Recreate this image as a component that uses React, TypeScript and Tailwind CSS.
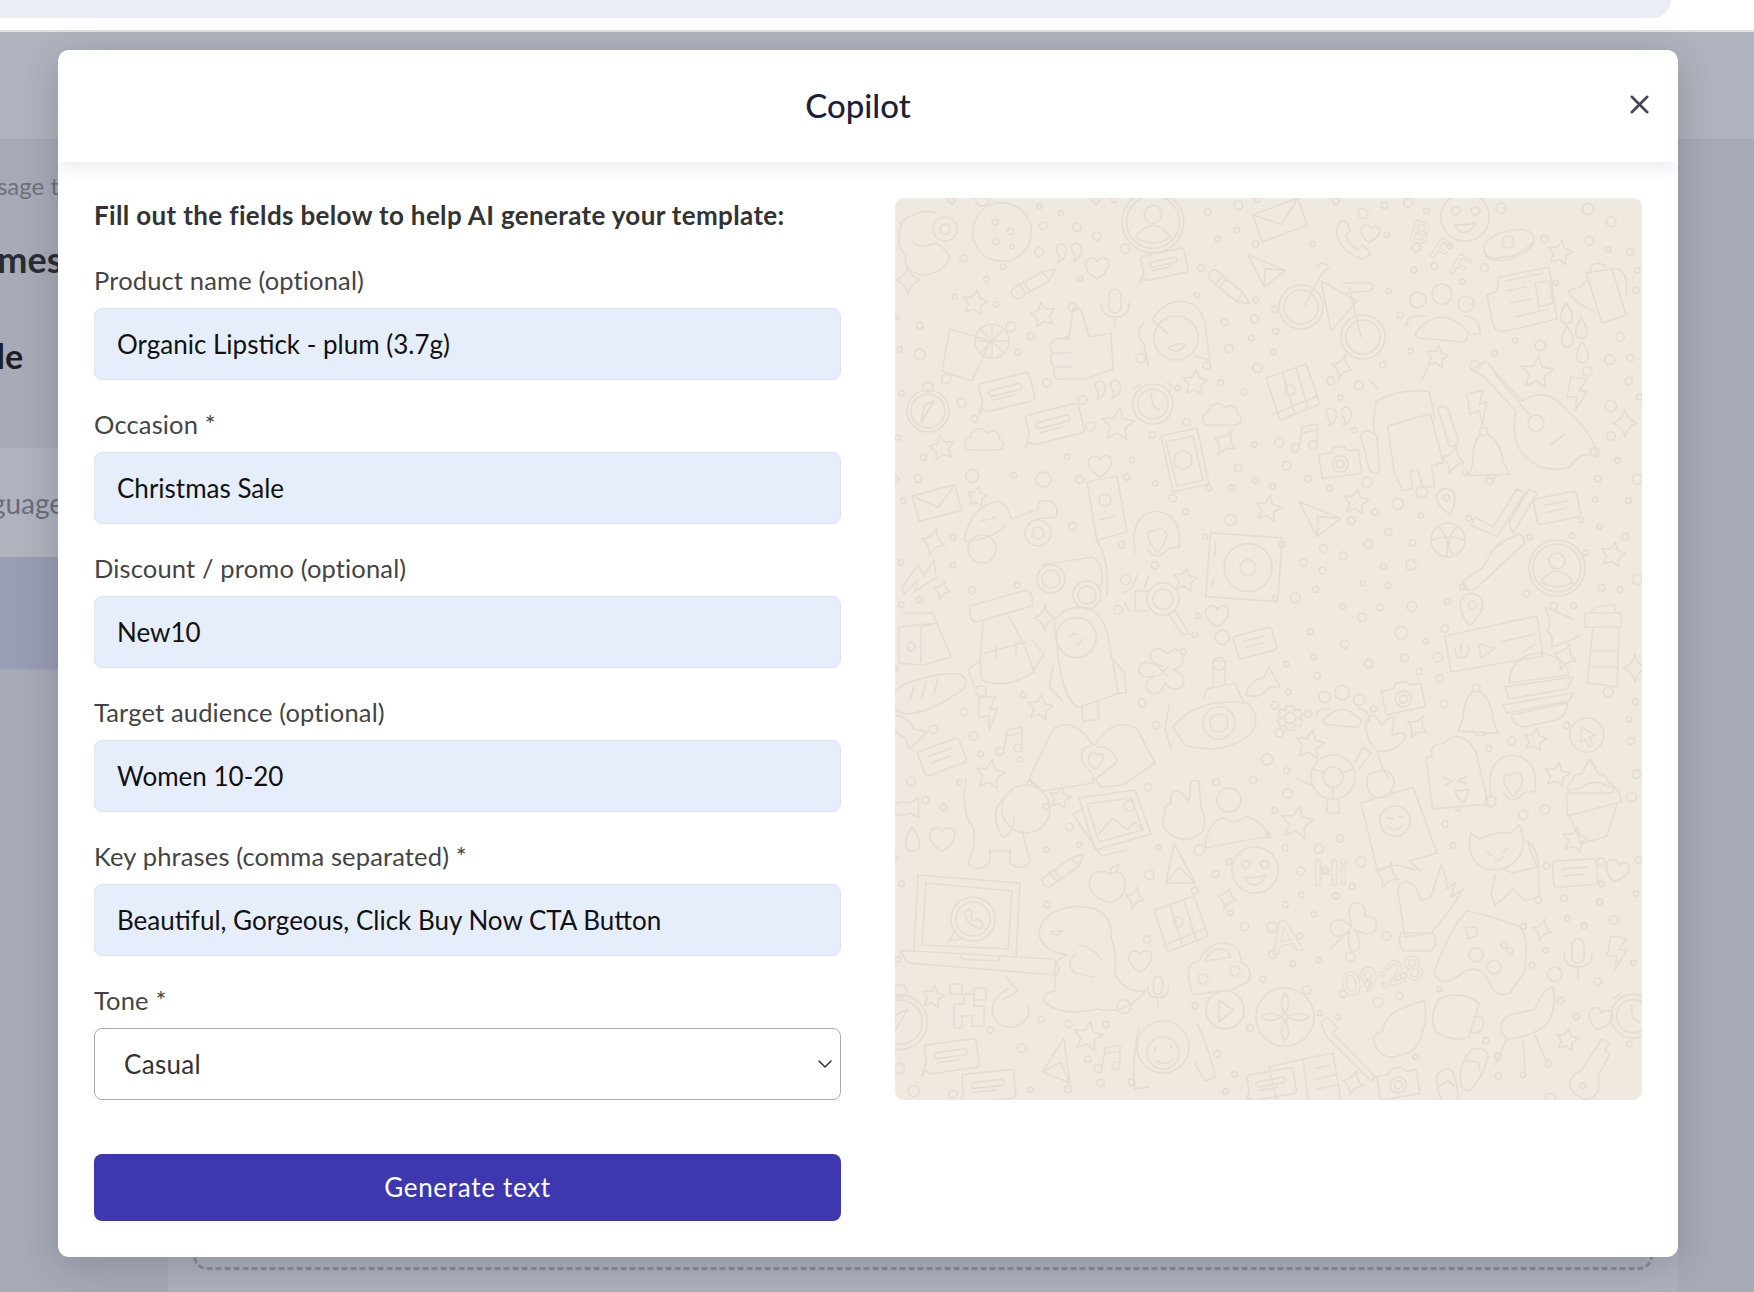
import { ChevronDown, X } from 'lucide-react';

const ring = (x: number, y: number, r: number) =>
  `M${x - r} ${y}a${r} ${r} 0 1 0 ${2 * r} 0a${r} ${r} 0 1 0 ${-2 * r} 0Z`;

const starPath = (R: number, r: number) => {
  const pts: string[] = [];
  for (let i = 0; i < 10; i++) {
    const a = -Math.PI / 2 + (i * Math.PI) / 5;
    const v = i % 2 ? r : R;
    pts.push(`${(Math.cos(a) * v).toFixed(1)} ${(Math.sin(a) * v).toFixed(1)}`);
  }
  return `M${pts.join('L')}Z`;
};

// wallpaper doodles, each drawn around 0,0. r is how much room it keeps free of dots
const shapes: Record<string, { d: string; r: number }> = {
  star: { d: starPath(13, 6.5), r: 15 },
  bigstar: { d: starPath(17, 8), r: 19 },
  spark: { d: 'M0-14Q2-3 12 0Q2 3 0 14Q-2 3-12 0Q-2-3 0-14Z', r: 14 },
  heart: { d: 'M0 12C-14 4-14-8-6-9C-3-10 0-7 0-5C2-8 5-10 8-9C15-7 12 5 0 12Z', r: 13 },
  cloud: { d: 'M-14 10C-22 10-22-2-14-3C-14-12-2-14 2-7C8-12 16-8 14-1C20 0 20 10 12 10Z', r: 20 },
  chat: { d: 'M-24-12Q-24-15-20-15H24Q28-15 28-11V10Q28 14 24 14H-20Q-24 14-25 10L-31 15L-24 3ZM-14-6H16Q19-3 16 0H-14Q-17-3-14-6ZM-14 4H8', r: 32 },
  card: { d: 'M-20-13H18Q22-13 22-9V9Q22 13 18 13H-18Q-22 13-22 9V-9Q-22-13-20-13ZM-12-5H12M-12 2H8', r: 24 },
  pencil: { d: 'M-20 6L8-14L21-18L16-6L-12 14Q-16 16-20 12Q-22 8-20 6ZM-14 0L-6 10M-10-3L-2 7M8-14L16-6', r: 24 },
  envelope: { d: 'M-20-12H20V12H-20ZM-20-12L0 4L20-12', r: 24 },
  handset: { d: 'M-10-16Q-16-10-12 0Q-6 12 8 16Q14 14 14 10L8 4L4 8Q-4 4-6-4L-2-8L-6-16Z', r: 18 },
  mic: { d: 'M-6-8A6 6 0 0 1 6-8V4A6 6 0 0 1-6 4ZM-14 0Q-14 14 0 14Q14 14 14 0M0 14V26', r: 24 },
  camera: { d: `M-20-10H-8L-4-15H6L10-10H20V14H-20Z${ring(0, 2, 8)}${ring(0, 2, 4)}`, r: 24 },
  avatar: { d: `${ring(0, 0, 28)}${ring(0, 0, 24)}${ring(0, -7, 8)}M-16 14Q0-8 16 14Q0 24-16 14Z`, r: 30 },
  cookie: { d: `${ring(0, 0, 28)}${ring(-8, -8, 3)}${ring(8, -2, 3)}${ring(-4, 10, 3)}${ring(12, 12, 2)}`, r: 30 },
  bear: { d: `${ring(15, -8, 12)}${ring(15, -8, 5)}M-30-14Q-10-30 6-24M-28-14Q-36 8-24 18Q-28 36-6 38Q14 36 20 20Q12 8 6 6Q-14 14-18 2`, r: 38 },
  donut: { d: `M-24 6C-26-12 20-24 26-8C30 10-20 26-24 6ZM-23 8C-16 18-6 10 2 12C10 8 18 6 26-4${ring(0, -3, 6)}`, r: 28 },
  emoji: { d: `${ring(0, 0, 22)}M-13-6Q-8-12-4-6Q-6-2-10-1ZM5-7Q11-12 14-5Q11-1 7-2ZM-9 7Q2 8 10 5Q6 15-3 14Q-8 13-9 7Z`, r: 24 },
  bike: { d: `${ring(-32, 0, 22)}${ring(-32, 0, 17)}${ring(30, 30, 22)}${ring(30, 30, 17)}M-28-2L-12-32L-4-40Q-12-48-16-40M-12-26L24-6L-2 24M-12-26L-2 24M28 30L16-20M10-24H38Q42-18 36-16L14-14`, r: 56 },
  people: { d: `${ring(-24, -18, 8)}${ring(0, -24, 10)}${ring(24, -14, 8)}M-26 14Q-0-16 26 14Q26 24 20 24L-22 20Q-28 18-26 14ZM-36 8Q-34-4-16-2M22-2Q38-2 38 16H28`, r: 40 },
  news: { d: 'M-24-26L26-36L34 16L-16 28L-22 28Q-28 28-30 22L-36-8L-26-12ZM-18-22L20-30M-16-12L2-16M-12 0L8-4M-8 14L26 6M12-20L26-22L30 0L16 4Z', r: 38 },
  teapot: { d: 'M-14-20L12-24L26 22L2 30ZM-12-14L-20-6L-32-2Q-24 12-6 18M12-24Q30-26 26 4M-10-22L-8-28Q0-32 6-26', r: 34 },
  drop: { d: 'M0-11Q8 0 6 6Q2 12-4 8Q-8 2 0-11Z', r: 10 },
  map: { d: `M-24-12L16-26L30 14L-10 30ZM-8-18L4 22M6-22L18 18${ring(0, 0, 5)}M-16 24L28 6`, r: 32 },
  android: { d: `M-34 4V-8L-28-30Q0-40 26-32L28-4M-24-42L-32-52M20-44L28-56M-20-4L24-10L30 40L18 42V62H6L4 44L-4 44V62H-14L-20 44ZM-40-2Q-48-2-48 4L-44 38Q-38 44-34 38L-32 4ZM32-14Q38-18 42-12L48 20Q44 28 38 24Z`, r: 56 },
  guitar: { d: `M-58-54L-44-62L-34-50L-8-22Q14-36 32-18L46-4Q62 10 68 34Q50 26 40 44Q12 52-6 32Q-20 16-14-12L-44-44Z${ring(6, 0, 8)}M20 22L34 12M-36-50L0-8`, r: 70 },
  bolt: { d: 'M-6-16L10-14L2-2L10-2L-2 18L0 4L-10 4Z', r: 16 },
  music: { d: `${ring(-10, 11, 4)}${ring(8, 8, 4)}M-6 11L-3-10L12-13L12 8M-4-4L12-7`, r: 15 },
  quote: { d: 'M-11-1Q-14-9-6-9Q0-6-2 0Q-4 8-10 9Q-6 4-11-1ZM4-2Q2-10 9-10Q15-7 13 0Q11 7 5 8Q9 3 4-2Z', r: 14 },
  bell: { d: `${ring(0, -19, 4)}M-4-16Q-14-8-16 10L-22 22L18 28L14 14Q14-6 4-15M-6 26Q0 32 6 27`, r: 26 },
  send: { d: 'M-18-20L20 4L-6 18ZM-6 18L-2-2L20 4', r: 22 },
  thumb: { d: 'M-8-10L-4-38Q2-42 6-32L12-10L34-14L36 22L8 32L-20 32Q-26 26-22 20Q-30 14-24 6Q-30-2-22-8ZM-24 6H-6M-22 20H-6M-20-8H-6', r: 38 },
  drink: { d: `M-22-18L18-6L0 34L-30 24Z${ring(20, -6, 17)}M20-22V10M6-6H36M8-18L32 6M8 6L32-18`, r: 36 },
  girl: { d: `${ring(-2, 8, 22)}M-10 4L-26-10Q-12-32 8-28Q26-24 28 2L32 30L16 26M-34-8Q-44 4-34 14L-30 36M-10 18Q0 26 8 14Q2 12-10 18Z`, r: 38 },
  compass: { d: `${ring(0, 4, 21)}${ring(0, 4, 17)}${ring(0, -20, 5)}M6-6L-7 16L-3-2Z`, r: 26 },
  clock: { d: `${ring(0, 2, 20)}${ring(0, 2, 15)}M-2-8L0 4L6 8M-18-14L-12-18M14-20L20-14`, r: 24 },
  phone: { d: `M-22-22L14-30L26 26L-10 34ZM-17-16L10-22L20 22L-6 28Z${ring(0, 2, 9)}`, r: 34 },
  bubblefish: { d: 'M-20 0Q-8-14 10-8L22-16V12L10 6Q-8 14-20 0Z', r: 24 },
  scooter: { d: `M-46 14Q-40-20-12-26Q-4-24 2-8L28-18Q26-28 40-26Q50-20 46-10L26-8M-46 14Q-20 14-4-2M-28-6L-14-10${ring(-28, 22, 14)}${ring(28, 6, 13)}${ring(28, 6, 6)}`, r: 50 },
  power: { d: `M-16-28L14-34L24 22L-6 30Z${ring(2, -10, 6)}M-4 10L12 6`, r: 32 },
  dome: { d: 'M-22 20Q-28-20 0-22Q26-18 22 14L10 16Q0 30-10 16M-8 8Q-12-4-2-2Q6-8 10 2Q8 12 0 20Z', r: 26 },
  vinyl: { d: `M-32-32H40V32H-32Z${ring(8, 0, 24)}${ring(8, 0, 8)}M-26-8V-24M-26 14V20`, r: 44 },
  ribbon: { d: 'M-18 10L-2-14L4-2L14-18L16 0L-6 14L-2 2L-16 16Z', r: 18 },
  glasses: { d: `${ring(-22, -4, 14)}${ring(-22, -4, 9)}${ring(14, 12, 14)}${ring(14, 12, 9)}M-32-18L20-26Q32-18 28 4M22-44Q36-30 34 12`, r: 44 },
  magnifier: { d: `${ring(6, -4, 16)}${ring(6, -4, 10)}M18 8L32 30L26 32L12 12M-8-12H-22V8H-10M-26-14L-34-10M-32 0L-28 8M-20-28L-24-16M-8-28L-12-16`, r: 36 },
  milk: { d: 'M-26-10L12-14L26 20L-2 28L-26 26ZM-22-24H8L12-14M12-14L-4-10V26M-18 10Q-14 0-10 10Q-14 18-18 10Z', r: 32 },
  backpack: { d: 'M-30-34L26-50Q34-48 32-34L-24-18Q-32-20-30-34ZM-16-20Q-22 20-18 40Q6 50 34 32Q24 0 8-24M-18 14L26 2M-4 6V18M16 2V14M-20 20L-32 30L-26 46M32 0L44 14L34 30', r: 50 },
  astro: { d: `${ring(-4, -26, 20)}M-24-24Q-30-56 0-56Q26-56 28-18L32 34L-10 44Q-26 30-24-24ZM-10-28Q-6-32-2-28M2-24Q-4-16-6-20M-6 44V58H10V40M-30 0L-36 20L-24 36M28-4L40 14V34L28 34`, r: 58 },
  flower: { d: 'M0-6Q-16-10-12-20Q-4-28 4-18Q14-28 20-16Q22-6 10-2Q24 2 20 14Q8 22 2 10Q-2 26-14 20Q-22 10-8 4Q-24 8-24-4Q-20-14-6-6ZM-4-4L4 4M4-4L-4 4', r: 24 },
  bread: { d: 'M-36 18Q-44 2-20-8Q10-18 30-16Q44-6 26 4Q0 22-22 24Q-30 24-36 18ZM-16-4L-20 10M-4-8L-8 8M8-12L4 4', r: 38 },
  sub: { d: `M-44 4Q-20-26 30-20Q44-8 36 8Q10 34-32 22Z${ring(2, 0, 16)}${ring(2, 0, 9)}M-14-24L-10-34L18-40L26-22M-4-36V-62M8-40V-60M-4-62H10M-48-18L-52 6L-46 26`, r: 56 },
  hands: { d: 'M-64 26L-40-24Q-20-38 0-8Q-16-6-10 10L0 22L0 30L-50 38ZM2-8Q20-38 44-24L62 10L30 32L8 34L2 26Q20 14 24 8Q18-8 4-6M-4 4Q0-4 4 2Q10-2 10 6Q6 14 2 16Q-6 12-4 4Z', r: 62 },
  checks: { d: 'M-28 4L-10 14L14-24L22-20L-6 24L-32 12ZM6 10L26-24L34-20L10 20Z', r: 30 },
  ball: { d: `${ring(0, 0, 17)}M-17 0Q0-6 17 0M-10-14Q4 0 -2 17M10-14Q-6 0 6 16`, r: 19 },
  shoe: { d: 'M-30 20L-10 6L6-18L26-28Q34-26 32-18L-18 28Q-28 30-30 20ZM-24 26L-30 20M-2-10L12-20', r: 36 },
  pin: { d: `M0 18Q-14 4-12-6Q-8-16 2-14Q12-10 10 0Q8 10 0 18Z${ring(0, -3, 4)}`, r: 18 },
  voice: { d: `M-48-4L44-24L50 16L-42 32ZM-32 4V16M-38 8Q-38 18-32 18Q-24 18-24 6M-14 4L2 8L-12 18ZM8 2L42-6M30 12L42 4`, r: 48 },
  light: { d: `M-18-30H18L18-16H-18ZM-12-30Q-10-38 12-38L12-30M-10-16L-16 40L14 44L16-16M-12 8H14M-14 24H14M-30-24L-58-36Q-50-20-56-12Q-48-8-52 4Q-36 0-22-8`, r: 44 },
  burger: { d: 'M-28-10Q-26-40 6-40Q30-34 32-18ZM-32-6L36-16L30-4L-28 6ZM-34 12L36 0L32 8L-30 20ZM-26 22L30 10Q30 26 14 28L-14 34Q-24 32-26 22Z', r: 42 },
  gear: { d: `${ring(0, 0, 7)}M-5-15H5L6-9L12-11L16-3L10 0L16 3L12 11L6 9L5 15H-5L-6 9L-12 11L-16 3L-10 0L-16-3L-12-11L-6-9Z`, r: 17 },
  tulip: { d: 'M-16-24Q-18-36-8-38L0-28Q8-38 12-36L10-18Q22-22 24-16Q14 0-4-2Q-14-8-16-24ZM-4-2Q-2 14 6 24M-14 22Q0 14 8 20Q18 30 4 44Q-10 48-14 36Q-16 28-14 22Z', r: 44 },
  taco: { d: 'M-24 40L-26-6Q-28-14-20-12Q-22-26-8-24Q10-40 24-14L32 40ZM-10 18L-2 14L-10 10M14 10L4 14L12 18M0 24H14L8 36Q2 34 0 24Z', r: 38 },
  turtle: { d: `${ring(0, 0, 22)}${ring(0, 0, 10)}M-20-8L-8-4M20-8L8-4M0 10V22M22-14L30-30L38-24L26-8M-22 8L-36 2M-6 22V36H6V22`, r: 38 },
  cursorbadge: { d: `${ring(0, 0, 17)}M-6-8L8 0L2 2L6 10L2 12L-2 4L-6 8Z`, r: 18 },
  poop: { d: 'M0-22Q8-10 10-4Q22-4 22 6Q34 10 28 20H-26Q-32 10-22 6Q-22-4-10-4Q-6-14 0-22Z', r: 30 },
  dog: { d: `${ring(26, -18, 24)}M4-28Q-12-16 2 10Q14 8 14-10M-34-48Q-40-14-26 2Q-24 20-32 36Q-20 48-10 34V24H10L10 36Q22 46 30 34L22 4`, r: 48 },
  photo: { d: `M-34-22L22-30L38 14L-18 30ZM-26-16L18-22L30 10L-14 22Z${ring(16, -14, 5)}M-16 16L0-2L14 10L22 2L30 10M-30-12L-40-6L-12 36L14 30`, r: 42 },
  victory: { d: 'M-20 0Q-26 14-14 22Q4 32 18 18Q22 4 16-6L14-32L6-32L4-12L-6-22Q-16-24-14-10Q-22-8-20 0Z', r: 34 },
  person: { d: `${ring(-4, -20, 12)}M-28 28Q-26 2-10-2Q2 6 14-4Q30 2 36 16Z`, r: 36 },
  apple: { d: 'M-16-6Q-6-14 2-8Q14-14 18-2Q20 14 6 20Q0 22-4 18Q-16 14-18 2ZM2-8Q4-16 12-18Q12-10 4-8', r: 22 },
  laptop: { d: 'M-52-48L50-40L46 34L-56 28ZM-44-40L42-32L38 26L-48 22ZM-70 28L-62 40L86 52Q92 46 84 36L46 34M-56 28L-70 28M-10 30L-8 36L28 38L30 32', r: 84 },
  wa: { d: `${ring(0, 0, 22)}${ring(0, 0, 17)}M-18 12L-24 22L-10 20M-8-8Q-8 6 8 10L10 4L4 0L0 2Q-2 0-2-4L0-6L-4-10Z`, r: 24 },
  dino: { d: `M-40-36Q-20-52 8-44Q26-36 24-16Q30 0 28 20Q36 40 58 38Q40 62 10 56Q-24 64-42 50Q-46 40-32 38V12Q-28 4-20 2Q-44-2-48-18Q-48-28-40-36ZM-36-20Q-30-16-24-22H-36ZM-8-8Q6-6 14 6M-12 2Q-22 10-12 20L6 24`, r: 62 },
  car: { d: `M-28 14Q-32-4-18-6Q-10-24 8-24Q24-22 24-4Q36 0 32 14L16 22L-24 28Z${ring(-14, 12, 5)}${ring(18, 4, 5)}M-12-6L14-10Q12-18 2-18Q-8-16-12-6Z`, r: 34 },
  play: { d: `${ring(0, 0, 19)}M-6-10L8 0L-6 12Z`, r: 20 },
  monkey: { d: `${ring(-4, 0, 26)}${ring(-4, 6, 16)}M-28-20Q-36 20-32 42L-18 40M30-24Q44 6 48 30L38 34L28 16M-12 0V4M4-2V2M-10 14Q-2 20 6 12`, r: 48 },
  pixel: { d: 'M-18-16H-6V-6H-18ZM6-12H18V0H6ZM-4-6H6V6H16V26H4V16H-6V28H-14V4H-4Z', r: 28 },
  refresh: { d: 'M-2-18Q-18-10-18 4Q-14 22 4 20Q22 14 18-2M-4-30L8-16L-6-8', r: 26 },
  wink: { d: `M-34-24L18-40L42 26L14 34L26 44L2 38L-18 42Z${ring(0, -6, 15)}M-8-10L-2-8M4-10H8M-6 0Q0 6 8-2`, r: 42 },
  clover: { d: 'M0 0Q-6-20 2-22Q12-24 12-10Q24-10 22 2Q18 10 2 2Q12 18 2 22Q-6 20-2 4Q-16 14-20 2Q-20-8-8-6ZM0 0L-20 20', r: 24 },
  okhand: { d: 'M-18 34L-24-4Q-28-20-16-22Q-6-18-2-2Q4-4 8-6L18-38Q24-24 24-14L32-20L28-6L40-14Q28 8 8 30ZM-22 30H10Q16 40 8 48H-20Q-26 40-22 30Z', r: 48 },
  pad: { d: `M-46 18Q-24-36-12-42Q16-36 40-26Q50-14 44 20L30 40Q14 46 8 26Q-2 10-18 20Q-40 38-46 18Z${ring(-4, 2, 7)}${ring(14, 14, 7)}M-14-26L-4-26L-2-18L-12-14Z${ring(24, -8, 3)}${ring(30, -2, 3)}`, r: 48 },
  lemon: { d: `${ring(0, 0, 29)}${ring(0, 0, 3)}M0-3Q-7-16 0-24Q7-16 0-3M3 0Q16-7 24 0Q16 7 3 0M0 3Q-7 16 0 24Q7 16 0 3M-3 0Q-16-7-24 0Q-16 7-3 0`, r: 30 },
  croissant: { d: `M-22 20Q-32 4-18 2Q-14-18 8-24L24-30Q28-10 22 2Q20 22-2 26Q-14 30-22 20Z`, r: 30 },
  mug: { d: `M-16-16Q4-26 24-12L14 22Q-4 28-20 16Q-26 0-16-16ZM18 2Q30-2 28 12Q24 20 14 18`, r: 28 },
  chair: { d: 'M-26 0Q-26-12-8-14L8-18Q16-38 26-40Q30-24 22-6Q12 8-18 12Q-26 10-26 0ZM-20 12L-32 38M-4 14L-2 42M8 8L22 40', r: 40 },
  key: { d: `M-8 6L4-30L12-28L10-20L16-18L10 6Q20 26 4 32Q-14 32-16 18Q-14 10-8 6Z${ring(-2, 20, 3)}`, r: 32 },
  flip: { d: 'M-6 22Q-16 4-6-16Q6-24 12-14Q12 8 4 22Q0 26-6 22ZM-10-4L4-6L8 2', r: 24 },
  brush: { d: 'M-26-24L-20-30L-10-20L-14-14L28 30L24 34L-20-10Z', r: 30 },
  book: { d: 'M-38-10L-4-18L2 28L-28 34ZM-4-18L26-24L34 24L2 28M8-8L22-12M8 2L28-2M10 12L30 8', r: 42 },
  cupcake: { d: 'M-26-8Q-30-22-12-22Q0-32 14-24Q28-24 28-8L-26 6ZM-24 4L-12 34L14 26L24-6', r: 34 },
  cat: { d: `M-26-34L-18-28Q0-36 14-34L22-42Q30-28 24-14Q14 6-12 2Q-32-8-26-34ZM-10-16L-6-12M10-18L6-14M-2-8Q2-4 6-10M6 2L16 6L40 0L30-26Q42-20 42 10L42 30L28 34L16 22L8 30L-2 38L-6 28L-2 8`, r: 44 },
};

// [shape, x, y, scale, rotation] in pattern coordinates (the panel is 747 by 900)
const doodles: [string, number, number, number, number][] = [
  ['avatar', 258, 23, 1.1, 0], ['cookie', 107, 33, 1.05, 10], ['bear', 35, 38, 1, 0], ['pencil', 138, 86, 1, 5],
  ['chat', 268, 66, 0.85, -12], ['pencil', 332, 89, 1, 75], ['mic', 220, 104, 1, 0], ['thumb', 182, 148, 1, 0],
  ['girl', 283, 131, 1, 0], ['drink', 77, 148, 1, 0], ['chat', 110, 194, 1, -14], ['chat', 158, 226, 1.05, -14],
  ['compass', 33, 208, 1, 0], ['clock', 258, 203, 1, 0], ['cloud', 328, 216, 1, 0], ['cloud', 90, 241, 1, 0],
  ['phone', 288, 259, 1, 0], ['heart', 202, 68, 1, 0], ['heart', 205, 266, 1, 0], ['star', 80, 104, 1, 10],
  ['star', 148, 116, 1, -10], ['star', 300, 184, 1, 5], ['bigstar', 223, 226, 1, 5], ['star', 47, 249, 1, -10],
  ['spark', 13, 81, 1, 0], ['spark', 330, 244, 1, 30], ['quote', 173, 54, 1, 0], ['quote', 212, 191, 1, 0],
  ['send', 372, 71, 0.9, -10], ['emoji', 570, 18, 1.1, 0], ['donut', 613, 46, 1, 0], ['handset', 458, 41, 1.2, 0],
  ['heart', 475, 34, 0.8, 10], ['bike', 438, 108, 1, 0], ['people', 547, 119, 1, 0], ['news', 628, 104, 1, 0],
  ['teapot', 705, 94, 1, 0], ['drop', 671, 115, 1, 0], ['drop', 686, 130, 1, 0], ['drop', 672, 138, 1, 0], ['drop', 687, 154, 1, 0],
  ['bigstar', 642, 174, 1, 5], ['star', 542, 158, 0.9, 10], ['star', 665, 54, 1, 10], ['map', 395, 191, 1, 0],
  ['android', 513, 228, 1, -8], ['guitar', 635, 224, 1, 0], ['bolt', 682, 194, 1, 0], ['bolt', 583, 208, 1, -20],
  ['spark', 730, 224, 1, 0], ['spark', 447, 168, 0.9, 15], ['spark', 558, 261, 1, 15], ['music', 410, 238, 1, 0],
  ['quote', 443, 218, 1, 0], ['camera', 445, 263, 1, -8], ['bell', 592, 251, 1, -10], ['envelope', 385, 21, 1.2, -20],
  ['envelope', 42, 304, 1.1, -15], ['scooter', 115, 328, 1, 0], ['power', 208, 311, 1, 0], ['dome', 262, 334, 1, 0],
  ['vinyl', 345, 368, 1, 4], ['spark', 38, 343, 1, 15], ['spark', 47, 391, 0.7, 15], ['spark', 150, 419, 0.9, 0],
  ['ribbon', 25, 379, 1, 0], ['glasses', 178, 384, 1, 0], ['magnifier', 262, 404, 1, 0], ['milk', 30, 438, 1, 0],
  ['backpack', 105, 441, 1, 0], ['astro', 188, 464, 1, -6], ['flower', 268, 473, 1, 0], ['bread', 35, 491, 1, 0],
  ['sub', 322, 524, 1, 0], ['hands', 198, 554, 1, 0], ['bolt', 93, 513, 1, -10], ['star', 145, 509, 1, 8],
  ['star', 290, 381, 0.95, 8], ['bigstar', 95, 576, 0.9, 8], ['star', 82, 298, 0.8, 8], ['heart', 322, 416, 1, 0],
  ['music', 115, 541, 1, 0], ['card', 47, 558, 1, -20], ['card', 360, 444, 0.9, -15], ['bubblefish', 365, 488, 0.8, -30],
  ['bubblefish', 8, 529, 0.9, 45], ['bigstar', 373, 310, 0.8, 10], ['bubblefish', 8, 610, 0.7, 0],
  ['send', 425, 319, 1, -10], ['star', 461, 303, 1, 8], ['pin', 552, 301, 0.8, -10], ['pin', 577, 409, 1, 10],
  ['checks', 608, 314, 1, 0], ['card', 662, 309, 1, -12], ['ball', 553, 341, 1, 0], ['shoe', 597, 363, 1, 0],
  ['avatar', 662, 369, 1, 0], ['star', 718, 356, 1, 10], ['voice', 598, 441, 1, 0], ['light', 708, 444, 1, 0],
  ['spark', 670, 458, 1, 20], ['spark', 740, 469, 1, 0], ['spark', 522, 528, 0.9, 30], ['burger', 642, 494, 1, 0],
  ['camera', 508, 498, 1, -12], ['bell', 583, 508, 1, -5], ['people', 447, 511, 0.72, 0], ['gear', 395, 519, 0.8, 0],
  ['tulip', 487, 554, 1, 0], ['taco', 558, 568, 1, -5], ['cursorbadge', 692, 536, 1, 0], ['star', 640, 541, 0.9, 10],
  ['bigstar', 415, 546, 0.9, 10], ['star', 662, 576, 1, 10], ['poop', 695, 578, 0.8, 0], ['turtle', 438, 578, 1, 0],
  ['dome', 618, 578, 1, 0], ['dog', 105, 628, 1, 0], ['photo', 218, 621, 1, 0], ['victory', 290, 614, 1, 0],
  ['person', 338, 621, 1, 0], ['heart', 47, 639, 1.1, 0], ['drop', 17, 641, 1.2, 0], ['pencil', 168, 673, 1, 0],
  ['apple', 212, 683, 1, 0], ['send', 285, 671, 1, 30], ['emoji', 360, 671, 1.05, 0], ['laptop', 75, 724, 1, 0],
  ['wa', 78, 720, 1, 0], ['dino', 192, 754, 1, 0], ['map', 283, 723, 1, 0], ['car', 322, 768, 1, 0],
  ['heart', 245, 761, 1, 0], ['mic', 263, 788, 0.75, 0], ['play', 330, 811, 1, 0], ['monkey', 272, 848, 1, 0],
  ['pixel', 73, 801, 1, 0], ['refresh', 115, 808, 1, 0], ['star', 38, 798, 0.9, 10], ['bigstar', 193, 838, 0.9, 10],
  ['chat', 55, 858, 1, -8], ['chat', 92, 888, 1, -6], ['send', 165, 866, 1, 50], ['music', 213, 859, 1, 0],
  ['spark', 240, 699, 0.8, 15], ['spark', 332, 699, 0.8, 15], ['star', 165, 599, 0.85, 10], ['compass', 5, 818, 1.3, 0],
  ['chat', 375, 886, 0.9, -10], ['wink', 500, 628, 1, 0], ['clover', 457, 728, 1.1, 0], ['okhand', 528, 704, 1, 0],
  ['cat', 602, 668, 1, 0], ['pad', 585, 754, 1, 0], ['lemon', 390, 818, 1, 0], ['croissant', 505, 831, 1, 0],
  ['mug', 560, 816, 1, 0], ['chair', 632, 828, 1, 0], ['key', 695, 868, 1, 15], ['flip', 578, 868, 1, 15],
  ['flip', 552, 888, 0.9, -20], ['brush', 452, 848, 1, 0], ['book', 412, 878, 1, 0], ['camera', 503, 884, 1, -10],
  ['card', 680, 674, 1, -4], ['heart', 722, 671, 1, 15], ['heart', 705, 819, 1, 15], ['mic', 683, 754, 1, 0],
  ['bolt', 722, 753, 1, 0], ['bigstar', 402, 624, 1, 8], ['star', 680, 641, 1, 10], ['star', 672, 841, 0.9, 10],
  ['cupcake', 698, 611, 1, 0], ['spark', 492, 676, 1, 20], ['spark', 647, 731, 0.8, 15], ['spark', 458, 884, 0.9, 15],
  ['clock', 738, 815, 1.1, 0],
];

// letters in the wallpaper stay real text
const letters: [string, number, number, number, number][] = [
  ['B', 512, 40, 30, 20], ['F', 533, 56, 30, 30], ['F', 552, 72, 30, 30], ['Hi', 418, 686, 34, 0], ['A', 378, 756, 44, -10], ['09:28', 450, 798, 32, -14],
];

// little bubbles that fill the gaps, kept clear of the doodles
function makeDots() {
  const dots: { x: number; y: number; r: number }[] = [];
  let seed = 7;
  const rnd = () => {
    seed = (seed * 16807) % 2147483647;
    return seed / 2147483647;
  };
  for (let i = 0; i < 2600; i++) {
    const x = rnd() * 747;
    const y = rnd() * 900;
    const r = 2.5 + rnd() * rnd() * 5;
    const hit = doodles.some(([k, dx, dy, s]) => Math.hypot(dx - x, dy - y) < shapes[k].r * s * 0.88 + r + 2);
    if (hit || dots.some((d) => Math.hypot(d.x - x, d.y - y) < d.r + r + 12)) continue;
    dots.push({ x, y, r });
  }
  return dots;
}
const dots = makeDots();

function Wallpaper() {
  return (
    <svg viewBox="0 0 747 900" className="block w-[747px] h-[902px]" fill="none" stroke="#e4ded2" strokeWidth="1.7" strokeLinejoin="round" strokeLinecap="round">
      {dots.map((d, i) => (
        <circle key={i} cx={d.x} cy={d.y} r={d.r} />
      ))}
      {doodles.map(([k, x, y, s, rot], i) => (
        <path key={i} d={shapes[k].d} vectorEffect="non-scaling-stroke" transform={`translate(${x} ${y}) rotate(${rot}) scale(${s})`} />
      ))}
      {letters.map(([t, x, y, size, rot], i) => (
        <text key={i} x={x} y={y} fontSize={size} fontWeight="700" fontFamily="Lato, sans-serif" strokeWidth="1" transform={`rotate(${rot} ${x} ${y})`}>
          {t}
        </text>
      ))}
    </svg>
  );
}

const fields = [
  { label: 'Product name (optional)', value: 'Organic Lipstick - plum (3.7g)' },
  { label: 'Occasion *', value: 'Christmas Sale' },
  { label: 'Discount / promo (optional)', value: 'New10' },
  { label: 'Target audience (optional)', value: 'Women 10-20' },
  { label: 'Key phrases (comma separated) *', value: 'Beautiful, Gorgeous, Click Buy Now CTA Button' },
];

export default function App() {
  return (
    <div className="relative w-[1754px] h-[1292px] overflow-hidden bg-[#a7abb7] font-['Lato',sans-serif]">
      {/* Page behind the dialog */}
      <div className="h-[32px] bg-white border-b-2 border-[#e0e0e0]">
        <div className="w-[1671px] h-[18px] bg-[#e9edf6] rounded-br-[22px]" />
      </div>
      <div className="h-[108px] bg-[#b0b4bf] border-b border-[#a3a6b2]" />
      <div className="flex h-[1151px]">
        <div className="w-[168px] overflow-hidden whitespace-nowrap">
          <p className="mt-[31px] h-[30px] leading-[30px] text-[24px] text-[#6e717c] -ml-[48px]">Message to</p>
          <p className="mt-[38px] h-[40px] leading-[40px] text-[36px] font-bold text-[#2a2c34] -ml-[158px]">Template message</p>
          <p className="mt-[55px] h-[44px] leading-[44px] text-[34px] font-bold text-[#1d1e28] -ml-[45px]">Title</p>
          <div className="mt-[70px] h-[109px] bg-[#b0b4bf] flex items-center">
            <span className="text-[28px] text-[#6b6e79] -ml-[53px]">Language</span>
          </div>
          <div className="h-[113px] bg-[#9a9eb4] border-b border-[#a3a6b2]" />
        </div>
        <div className="flex-1 w-[1510px] bg-[#aeb2be] px-[25px] pb-[21px] pt-[500px]">
          <div className="h-full border-[3px] border-dashed border-[#8a8d98] rounded-[14px]" />
        </div>
        <div className="w-[76px]" />
      </div>

      {/* Dialog */}
      <div className="absolute left-[58px] top-[50px] w-[1620px] h-[1207px] bg-white rounded-[11px] shadow-[0_8px_40px_rgba(30,32,45,0.22)] overflow-hidden">
        <div className="relative h-[112px] flex items-center pl-[39px] pr-[19px] shadow-[0_4px_20px_rgba(0,0,0,0.09)]">
          <h2 className="flex-1 text-center text-[33px] leading-none font-medium text-[#1e1e38] -mt-[2px]">Copilot</h2>
          <button className="w-[40px] h-[40px] flex items-center justify-center text-[#45455a] -mt-[4px]">
            <X size={31} strokeWidth={2} />
          </button>
        </div>
        <div className="flex gap-[54px] px-[36px] pt-[36px]">
          <div className="w-[747px]">
            <p className="h-[36px] leading-[34px] text-[26px] tracking-[0.35px] font-bold text-[#333333] mb-[29px]">Fill out the fields below to help AI generate your template:</p>
            {fields.map((f) => (
              <div key={f.label} className="mb-[27px]">
                <label className="block h-[36px] leading-[34px] text-[25.5px] tracking-[0.15px] text-[#444444] mb-[9px]">{f.label}</label>
                <input
                  readOnly
                  value={f.value}
                  className="block w-full h-[72px] px-[22px] text-[26px] text-[#111111] bg-[#e7eefb] border border-[#dde2ea] rounded-[8px] outline-none"
                />
              </div>
            ))}
            <label className="block h-[36px] leading-[34px] text-[25.5px] tracking-[0.15px] text-[#444444] mb-[9px]">Tone *</label>
            <div className="relative">
              <select className="block w-full h-[72px] pl-[29px] pr-[40px] text-[26px] tracking-[0.3px] text-[#333333] bg-white border-[1.5px] border-[#aaaaaa] rounded-[8px] outline-none appearance-none">
                <option>Casual</option>
              </select>
              <ChevronDown size={24} strokeWidth={1.5} className="absolute right-[4px] top-[24px] text-[#333333]" />
            </div>
            <button className="block w-full h-[67px] mt-[54px] bg-[#3d38b0] text-white text-[26px] tracking-[0.7px] rounded-[8px]">Generate text</button>
          </div>
          <div className="w-[747px] h-[902px] bg-[#efe9df] rounded-[9px] overflow-hidden">
            <Wallpaper />
          </div>
        </div>
      </div>
    </div>
  );
}
